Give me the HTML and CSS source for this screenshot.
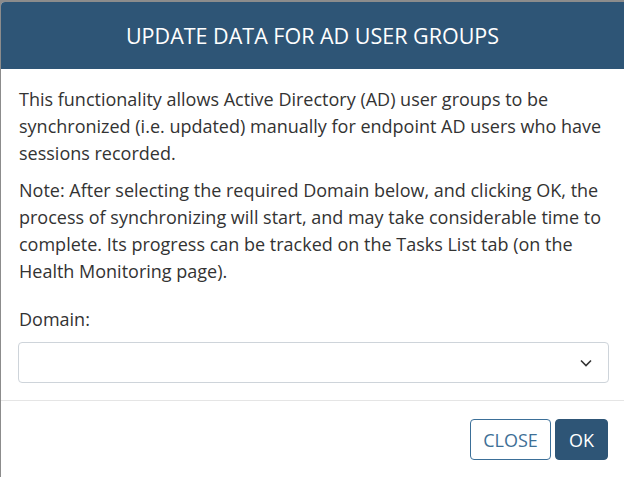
FILE: index.html
```html
<!DOCTYPE html>
<html>
<head>
<meta charset="utf-8">
<link rel="stylesheet" href="styles.css">
</head>
<body>
<div class="modal">
  <div class="modal-header">
    <h1 class="modal-title">UPDATE DATA FOR AD USER GROUPS</h1>
  </div>
  <div class="modal-body">
    <p class="para">This functionality allows Active Directory (AD) user groups to be synchronized (i.e. updated) manually for endpoint AD users who have sessions recorded.</p>
    <p class="para">Note: After selecting the required Domain below, and clicking OK, the process of synchronizing will start, and may take considerable time to complete. Its progress can be tracked on the Tasks List tab (on the Health Monitoring page).</p>
    <label class="label">Domain:</label>
    <div class="select">
      <svg class="chev" width="12" height="8" viewBox="0 0 12 8"><path d="M1 1.5 L6 6.5 L11 1.5" fill="none" stroke="#333" stroke-width="1.6"/></svg>
    </div>
  </div>
  <div class="modal-footer">
    <button class="btn btn-outline">CLOSE</button>
    <button class="btn btn-primary">OK</button>
  </div>
</div>
</body>
</html>
```
FILE: styles.css
```css
html, body {
  margin: 0;
  padding: 0;
  height: 100%;
}
body {
  background: #8c8c8c;
  font-family: "Open Sans", "Liberation Sans", sans-serif;
  overflow: hidden;
}
.modal {
  margin: 2px 0 0 1px;
  width: 623px;
  height: 475px;
  background: #fff;
  border-top-left-radius: 4px;
  overflow: hidden;
}
.modal-header {
  background: #2e5576;
  height: 67px;
  display: flex;
  align-items: center;
  justify-content: center;
}
.modal-title {
  margin: 0;
  color: #fff;
  font-weight: 400;
  font-size: 21.5px;
  line-height: 30px;
}
.modal-body {
  padding: 17px 15px 17px 17px;
  color: #333;
  border-bottom: 1px solid #e5e5e5;
}
.para {
  margin: 0 0 10px 1px;
  font-size: 18px;
  line-height: 27px;
}
.label {
  display: block;
  margin: 21px 0 9px 1px;
  font-size: 18px;
  line-height: 27px;
}
.select {
  height: 41px;
  box-sizing: border-box;
  border: 1px solid #ced4da;
  border-radius: 4px;
  display: flex;
  align-items: center;
  justify-content: flex-end;
  padding-right: 16px;
}
.modal-footer {
  display: flex;
  justify-content: flex-end;
  gap: 4px;
  padding: 18px 16px 0 0;
}
.btn {
  font-family: "Open Sans", "Liberation Sans", sans-serif;
  font-size: 18px;
  height: 41px;
  border-radius: 4px;
  padding: 0;
  cursor: pointer;
}
.btn-outline {
  background: #fff;
  border: 1px solid #3b6f98;
  color: #3e6f96;
  width: 81px;
}
.btn-primary {
  background: #2e5576;
  border: 1px solid #2e5576;
  color: #fff;
  width: 53px;
}
```
